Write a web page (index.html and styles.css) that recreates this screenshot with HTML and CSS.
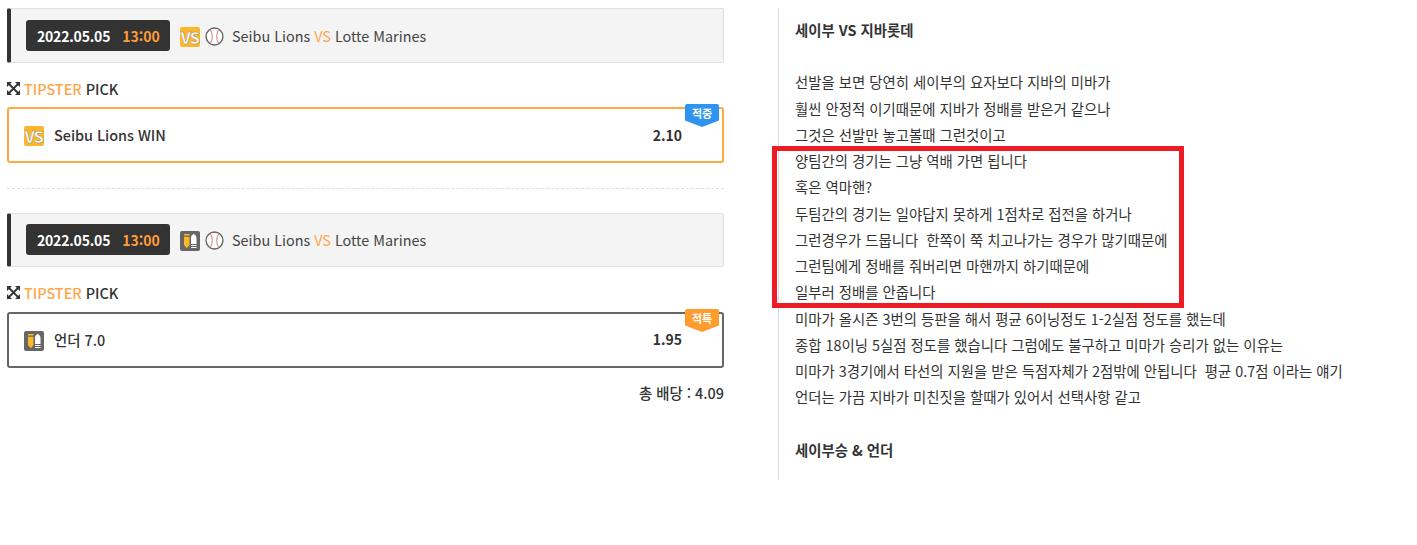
FILE: index.html
```html
<!DOCTYPE html>
<html lang="ko">
<head>
<meta charset="utf-8">
<title>Tipster Pick</title>
<link rel="stylesheet" href="styles.css">
</head>
<body>
<div class="page">
  <main class="picks">
    <section class="match">
      <div class="match-bar">
        <div class="when"><span class="date">2022.05.05</span><span class="time">13:00</span></div>
        <span class="badge badge-vs">VS</span>
        <svg class="ball" viewBox="0 0 18 18"><circle cx="9" cy="9" r="8" fill="#fff" stroke="#666" stroke-width="1.3"/><path d="M5 2.4C7.4 6.5 7.4 11.5 5 15.6M13 2.4C10.6 6.5 10.6 11.5 13 15.6" fill="none" stroke="#d08a8a" stroke-width="1"/></svg>
        <span class="teams">Seibu Lions <em>VS</em> Lotte Marines</span>
      </div>
      <h2 class="pick-title"><svg class="cross" viewBox="0 0 13 13"><path d="M0 0h5L0 5zM13 0v5L8 0zM0 13V8l5 5zM13 13H8l5-5z" fill="#333"/><path d="M2 2l9 9M11 2l-9 9" stroke="#333" stroke-width="1.8" fill="none"/></svg><b>TIPSTER</b> PICK</h2>
      <div class="pick pick-hit">
        <span class="badge badge-vs">VS</span>
        <span class="pick-name">Seibu Lions WIN</span>
        <span class="odds">2.10</span>
        <span class="ribbon ribbon-blue">적중</span>
      </div>
    </section>
    <hr class="divider">
    <section class="match match-second">
      <div class="match-bar">
        <div class="when"><span class="date">2022.05.05</span><span class="time">13:00</span></div>
        <span class="badge badge-ou"><svg viewBox="0 0 20 20"><path d="M4 3h5.500v1.600H4zM4 5.800h5.500v8.200l-2.700 3.200L4 14z" fill="#fbb62a"/><path d="M11 7c0-2 1-3 2.700-4.200C15.400 4 16.500 5 16.500 7v6H11zM11 14h5.500v1H11zM11 16h5.500v1H11z" fill="#fff"/></svg></span>
        <svg class="ball" viewBox="0 0 18 18"><circle cx="9" cy="9" r="8" fill="#fff" stroke="#666" stroke-width="1.3"/><path d="M5 2.4C7.4 6.5 7.4 11.5 5 15.6M13 2.4C10.6 6.5 10.6 11.5 13 15.6" fill="none" stroke="#d08a8a" stroke-width="1"/></svg>
        <span class="teams">Seibu Lions <em>VS</em> Lotte Marines</span>
      </div>
      <h2 class="pick-title"><svg class="cross" viewBox="0 0 13 13"><path d="M0 0h5L0 5zM13 0v5L8 0zM0 13V8l5 5zM13 13H8l5-5z" fill="#333"/><path d="M2 2l9 9M11 2l-9 9" stroke="#333" stroke-width="1.8" fill="none"/></svg><b>TIPSTER</b> PICK</h2>
      <div class="pick pick-miss">
        <span class="badge badge-ou"><svg viewBox="0 0 20 20"><path d="M4 3h5.500v1.600H4zM4 5.800h5.500v8.200l-2.700 3.200L4 14z" fill="#fbb62a"/><path d="M11 7c0-2 1-3 2.700-4.200C15.400 4 16.500 5 16.500 7v6H11zM11 14h5.500v1H11zM11 16h5.500v1H11z" fill="#fff"/></svg></span>
        <span class="pick-name">언더 7.0</span>
        <span class="odds">1.95</span>
        <span class="ribbon ribbon-orange">적특</span>
      </div>
    </section>
    <p class="total">총 배당 : 4.09</p>
  </main>
  <article class="analysis">
    <p class="strong">세이부 VS 지바롯데</p>
    <p>&nbsp;</p>
    <p>선발을 보면 당연히 세이부의 요자보다 지바의 미바가</p>
    <p>훨씬 안정적 이기때문에 지바가 정배를 받은거 같으나</p>
    <p>그것은 선발만 놓고볼때 그런것이고</p>
    <p>양팀간의 경기는 그냥 역배 가면 됩니다</p>
    <p>혹은 역마핸?</p>
    <p>두팀간의 경기는 일야답지 못하게 1점차로 접전을 하거나</p>
    <p>그런경우가 드뭅니다&nbsp; 한쪽이 쭉 치고나가는 경우가 많기때문에</p>
    <p>그런팀에게 정배를 줘버리면 마핸까지 하기때문에</p>
    <p>일부러 정배를 안줍니다</p>
    <p>미마가 올시즌 3번의 등판을 해서 평균 6이닝정도 1-2실점 정도를 했는데</p>
    <p>종합 18이닝 5실점 정도를 했습니다 그럼에도 불구하고 미마가 승리가 없는 이유는</p>
    <p>미마가 3경기에서 타선의 지원을 받은 득점자체가 2점밖에 안됩니다&nbsp; 평균 0.7점 이라는 얘기</p>
    <p>언더는 가끔 지바가 미친짓을 할때가 있어서 선택사항 같고</p>
    <p>&nbsp;</p>
    <p class="strong">세이부승 &amp; 언더</p>
    <div class="highlight"></div>
  </article>
</div>
</body>
</html>
```
FILE: styles.css
```css
* { box-sizing: border-box; }
html, body { margin: 0; padding: 0; background: #fff; }
body {
  font-family: "Noto Sans CJK KR", "Noto Sans", sans-serif;
  font-size: 14.4px;
  color: #333;
}
.page {
  display: flex;
  align-items: flex-start;
  padding: 8px 0 0 7px;
  width: 1417px;
  height: 545px;
}
.picks { width: 717px; flex: none; }
.match-bar {
  display: flex;
  align-items: center;
  height: 55px;
  padding-left: 15px;
  background: #f4f4f4;
  border: 1px solid #e0e0e0;
  border-left: 4px solid #333;
  border-radius: 2px;
}
.match-second .match-bar { height: 54px; padding-bottom: 1px; }
.when {
  display: flex;
  align-items: center;
  width: 144px;
  height: 31px;
  padding-left: 11px;
  background: #333;
  border-radius: 3px;
  font-size: 14px;
  font-weight: 700;
  letter-spacing: -0.2px;
  color: #fff;
  flex: none;
}
.time { margin-left: 12px; color: #ff9c3a; letter-spacing: 0; }
.badge {
  display: inline-flex;
  align-items: center;
  justify-content: center;
  width: 20px;
  height: 20px;
  border-radius: 2px;
  flex: none;
}
.badge svg { width: 20px; height: 20px; display: block; }
.badge-vs {
  background: #fbb62a;
  color: #fff;
  font-size: 16px;
  font-weight: 700;
  letter-spacing: -0.6px;
  line-height: 1;
  -webkit-text-stroke: 0.4px #888;
}
.badge-ou { background: #666; }
.match-bar .badge { margin-left: 10px; margin-top: 3px; }
.ball { width: 19px; height: 19px; margin-left: 5px; margin-top: 1px; flex: none; }
.teams { margin-left: 8px; color: #444; white-space: nowrap; }
.teams em { font-style: normal; color: #ffa64d; }
.pick-title {
  display: flex;
  align-items: center;
  margin: 15px 0 9px;
  height: 20px;
  font-size: 14.4px;
  font-weight: 500;
  color: #333;
  white-space: pre;
}
.match-second .pick-title { margin-bottom: 10px; }
.pick-title b { font-weight: 500; color: #ffa64d; }
.cross { width: 13px; height: 13px; margin-right: 4px; flex: none; }
.pick {
  position: relative;
  display: flex;
  align-items: center;
  height: 56px;
  padding: 0 40px 0 15px;
  border: 2px solid;
  border-radius: 3px;
  font-weight: 500;
}
.pick-hit { border-color: #ffa940; }
.pick-miss { border-color: #666; }
.pick .badge { margin-top: 2px; }
.pick-name { margin-left: 10px; margin-bottom: 2px; }
.odds { margin-left: auto; font-weight: 700; font-size: 14px; }
.pick-miss .odds { margin-bottom: 2px; }
.ribbon {
  position: absolute;
  top: -5px;
  right: 3px;
  width: 34px;
  height: 23px;
  padding-top: 1px;
  font-size: 11px;
  line-height: 17px;
  font-weight: 700;
  text-align: center;
  color: #fff;
  clip-path: polygon(0 0, 100% 0, 100% 72%, 50% 100%, 0 72%);
  border-radius: 2px 2px 0 0;
}
.ribbon-blue { background: #2f94ef; }
.ribbon-orange { background: #ff9c2e; }
.divider {
  height: 0;
  margin: 25px 0 24px;
  border: 0;
  border-top: 1px dashed #ddd;
}
.total {
  margin: 15px 0 0;
  text-align: right;
  font-weight: 500;
  line-height: 20px;
}
.analysis {
  position: relative;
  width: 600px;
  height: 472px;
  margin-left: 54px;
  padding: 8.9px 0 0 16px;
  border-left: 1px solid #ddd;
  flex: none;
}
.analysis p {
  margin: 0;
  height: 26.25px;
  line-height: 26.25px;
  white-space: nowrap;
}
.analysis .strong { font-weight: 700; }
.highlight {
  position: absolute;
  left: -7px;
  top: 138px;
  width: 412px;
  height: 162px;
  border: 5px solid #ed1c24;
}
```
